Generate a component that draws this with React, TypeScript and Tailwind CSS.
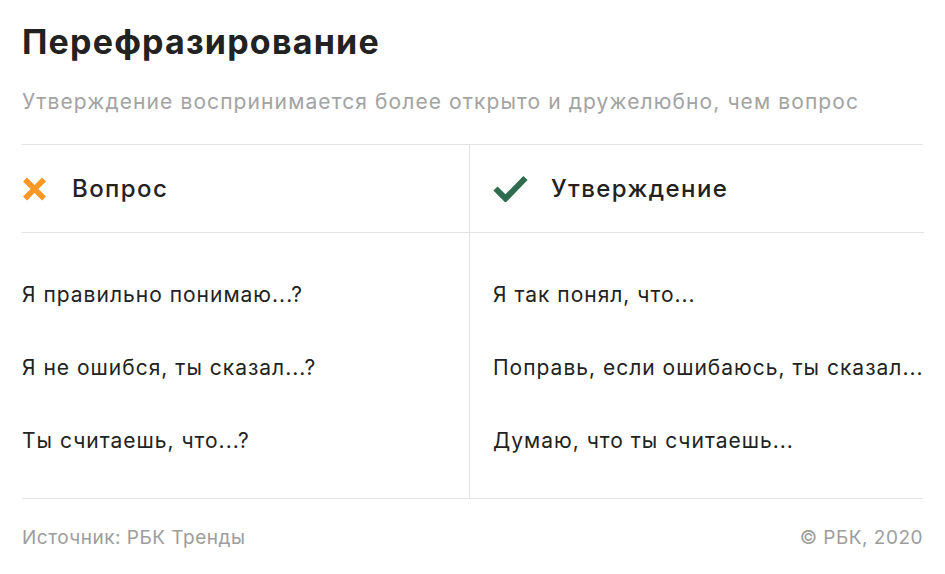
import React from "react";

const left = ["Я правильно понимаю...?", "Я не ошибся, ты сказал...?", "Ты считаешь, что...?"];
const right = ["Я так понял, что...", "Поправь, если ошибаюсь, ты сказал...", "Думаю, что ты считаешь..."];

export default function App() {
  return (
    <div className="w-[945px] h-[574px] bg-white px-[22px] text-[#222]" style={{ fontFamily: "Inter, 'Noto Sans', sans-serif" }}>
      <h1 className="pt-[22px] text-[34px] leading-[40px] font-bold tracking-[1.2px] text-[#222]">Перефразирование</h1>
      <p className="mt-[28px] text-[21px] leading-[24px] tracking-[1.1px] text-[#a3a3a3]">Утверждение воспринимается более открыто и дружелюбно, чем вопрос</p>
      <div className="mt-[30px] grid grid-cols-[447px_1fr] border-t border-b border-[#e3e3e3]">
        <div className="h-[88px] flex items-center border-b border-[#e3e3e3]">
          <svg width="25" height="24" viewBox="0 0 25 24" className="mr-[25px]">
            <path d="M3 2.5 L22 21.5 M22 2.5 L3 21.5" stroke="#fb9725" strokeWidth="5.5" strokeLinecap="butt" />
          </svg>
          <span className="text-[24px] font-medium tracking-[1.4px]">Вопрос</span>
        </div>
        <div className="h-[88px] flex items-center border-b border-l border-[#e3e3e3] pl-[23px]">
          <svg width="35" height="27" viewBox="0 0 35 27" className="mr-[23px]">
            <path d="M2.5 13.5 L12.5 23.5 L32.5 3" stroke="#2f6b4f" strokeWidth="6" fill="none" strokeLinejoin="miter" />
          </svg>
          <span className="text-[24px] font-medium tracking-[1.4px]">Утверждение</span>
        </div>
        <div className="pt-[25px] pb-[21px]">
          {left.map((t) => (
            <div key={t} className="h-[73px] flex items-center text-[21px] tracking-[1px]">{t}</div>
          ))}
        </div>
        <div className="pt-[25px] pb-[21px] border-l border-[#e3e3e3] pl-[23px]">
          {right.map((t) => (
            <div key={t} className="h-[73px] flex items-center text-[21px] tracking-[1px] whitespace-nowrap">{t}</div>
          ))}
        </div>
      </div>
      <div className="mt-[28px] flex justify-between text-[19px] leading-[22px] tracking-[0.5px] text-[#9d9d9d]">
        <span>Источник: РБК Тренды</span>
        <span>© РБК, 2020</span>
      </div>
    </div>
  );
}
